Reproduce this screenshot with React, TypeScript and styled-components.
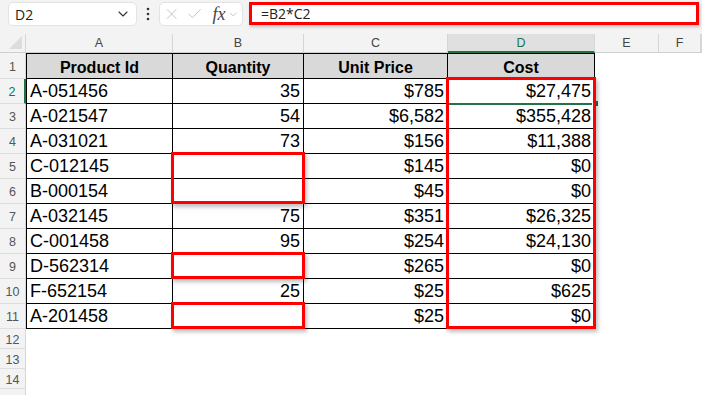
import styled, { createGlobalStyle } from 'styled-components'
import { ChevronDown, X, Check } from 'lucide-react'

const GlobalStyle = createGlobalStyle`
  html, body {
    margin: 0;
    padding: 0;
    background: #ffffff;
    overflow: hidden;
  }
  body {
    font-family: 'Liberation Sans', Arial, sans-serif;
  }
`

const Page = styled('div')`
  width: 702px;
  height: 395px;
  overflow: hidden;
  display: flex;
  flex-flow: column nowrap;
`

const Toolbar = styled('div')`
  height: 34px;
  flex: none;
  display: flex;
  align-items: flex-start;
  padding: 2px 0 0 8px;
  box-sizing: border-box;
  background: #f3f3f3;
`

const NameBox = styled('div')`
  width: 129px;
  height: 24px;
  box-sizing: border-box;
  background: #ffffff;
  border: 1px solid #e3e3e3;
  border-radius: 5px;
  display: flex;
  align-items: center;
  justify-content: space-between;
  padding: 0 5px 0 6px;
  font-family: 'Open Sans', 'Liberation Sans', sans-serif;
  font-size: 14px;
  color: #222;
`

const Dots = styled('div')`
  width: 22px;
  height: 24px;
  display: flex;
  align-items: center;
  justify-content: center;
`

const FxBox = styled('div')`
  width: 84px;
  height: 24px;
  box-sizing: border-box;
  background: #ffffff;
  border: 1px solid #e3e3e3;
  border-radius: 5px;
  display: flex;
  align-items: center;
  gap: 6px;
  padding: 0 3px 0 3px;
  color: #b4b4b4;
`

const FxLabel = styled('span')`
  font-family: 'Liberation Serif', 'Times New Roman', serif;
  font-style: italic;
  font-size: 18px;
  color: #444;
  margin-left: 3px;
  margin-right: -5px;
`

const FormulaInput = styled('div')`
  margin-left: 6px;
  width: 450px;
  height: 23px;
  box-sizing: border-box;
  background: #ffffff;
  border: 3px solid #ff0000;
  box-shadow: 1px 2px 3px rgba(0, 0, 0, 0.2);
  display: flex;
  align-items: center;
  padding-left: 9px;
  font-family: 'Open Sans', 'Liberation Sans', sans-serif;
  font-size: 14px;
  color: #222;
`

const Sheet = styled('div')`
  flex: 1;
  display: grid;
  grid-template-columns: 26px 147px 131px 144px 147px 64px 1fr;
  grid-template-rows: 19px 26px repeat(10, 25px) repeat(4, 20px);
  overflow: hidden;
`

interface Pos {
  $row: number
  $col: number
}

const ColHead = styled('div')<Pos & { $active?: boolean }>`
  grid-row: ${p => p.$row};
  grid-column: ${p => p.$col};
  background: ${p => (p.$active ? '#e0e0e0' : '#f3f3f3')};
  border-right: 1px solid #d6d6d6;
  border-bottom: ${p => (p.$active ? '2px solid #217346' : '1px solid #cfcfcf')};
  display: flex;
  align-items: center;
  justify-content: center;
  font-size: 12.5px;
  color: ${p => (p.$active ? '#217346' : '#444')};
  box-sizing: border-box;
`

const Corner = styled('div')`
  grid-row: 1;
  grid-column: 1;
  background: #f3f3f3;
  border-right: 1px solid #d6d6d6;
  border-bottom: 1px solid #cfcfcf;
  box-sizing: border-box;
  position: relative;

  &::after {
    content: '';
    position: absolute;
    right: 3px;
    bottom: 3px;
    border-style: solid;
    border-width: 0 0 13px 13px;
    border-color: transparent transparent #dcdcdc transparent;
  }
`

const RowHead = styled('div')<Pos & { $active?: boolean }>`
  grid-row: ${p => p.$row};
  grid-column: ${p => p.$col};
  background: #f3f3f3;
  border-bottom: 1px solid #dedede;
  border-right: ${p => (p.$active ? '2px solid #217346' : '1px solid #d6d6d6')};
  display: flex;
  align-items: center;
  justify-content: center;
  padding-top: 2px;
  font-size: 12.5px;
  color: ${p => (p.$active ? '#217346' : '#555')};
  box-sizing: border-box;
`

const Cell = styled('div')<Pos & { $head?: boolean; $align?: 'left' | 'right' }>`
  grid-row: ${p => p.$row};
  grid-column: ${p => p.$col};
  box-sizing: border-box;
  border-right: 1px solid #000;
  border-bottom: 1px solid #000;
  border-top: ${p => (p.$row === 2 ? '1px solid #000' : 'none')};
  border-left: ${p => (p.$col === 2 ? '1px solid #000' : 'none')};
  background: ${p => (p.$head ? '#d9d9d9' : '#ffffff')};
  display: flex;
  align-items: flex-end;
  justify-content: ${p => (p.$head ? 'center' : p.$align === 'right' ? 'flex-end' : 'flex-start')};
  padding: 0 3px 1px 3px;
  font-size: ${p => (p.$head ? '16px' : '18px')};
  font-weight: ${p => (p.$head ? 700 : 400)};
  color: #000;
  white-space: nowrap;
`

const Selection = styled('div')<Pos>`
  grid-row: ${p => p.$row};
  grid-column: ${p => p.$col};
  border-bottom: 2px solid #217346;
  margin-bottom: -1px;
  position: relative;
  z-index: 1;

  &::after {
    content: '';
    position: absolute;
    right: -4px;
    bottom: -4px;
    width: 5px;
    height: 5px;
    background: #217346;
    border: 1px solid #fff;
  }
`

const Highlight = styled('div')<{ $rows: string; $col: number }>`
  grid-row: ${p => p.$rows};
  grid-column: ${p => p.$col};
  margin: -2px -1px 0 -2px;
  border: 3px solid #ff0000;
  box-shadow: 2px 3px 4px rgba(0, 0, 0, 0.25);
  z-index: 2;
  pointer-events: none;
`

const rows: string[][] = [
  ['A-051456', '35', '$785', '$27,475'],
  ['A-021547', '54', '$6,582', '$355,428'],
  ['A-031021', '73', '$156', '$11,388'],
  ['C-012145', '', '$145', '$0'],
  ['B-000154', '', '$45', '$0'],
  ['A-032145', '75', '$351', '$26,325'],
  ['C-001458', '95', '$254', '$24,130'],
  ['D-562314', '', '$265', '$0'],
  ['F-652154', '25', '$25', '$625'],
  ['A-201458', '', '$25', '$0'],
]

const headers = ['Product Id', 'Quantity', 'Unit Price', 'Cost']
const letters = ['A', 'B', 'C', 'D', 'E', 'F']

export default function App (): JSX.Element {
  return (
    <Page>
      <GlobalStyle />
      <Toolbar>
        <NameBox>
          <span>D2</span>
          <ChevronDown size={16} strokeWidth={1.6} color='#333' />
        </NameBox>
        <Dots>
          <svg width='4' height='14' viewBox='0 0 4 14'>
            <circle cx='2' cy='2' r='1.3' fill='#333' />
            <circle cx='2' cy='7' r='1.3' fill='#333' />
            <circle cx='2' cy='12' r='1.3' fill='#333' />
          </svg>
        </Dots>
        <FxBox>
          <X size={18} strokeWidth={1.1} />
          <Check size={18} strokeWidth={1.1} />
          <FxLabel>fx</FxLabel>
          <ChevronDown size={13} strokeWidth={1.4} />
        </FxBox>
        <FormulaInput>=B2*C2</FormulaInput>
      </Toolbar>
      <Sheet>
        <Corner />
        {letters.map((l, i) => (
          <ColHead key={l} $row={1} $col={i + 2} $active={l === 'D'}>{l}</ColHead>
        ))}
        <ColHead $row={1} $col={8} />
        {Array.from({ length: 15 }, (_, i) => (
          <RowHead key={i} $row={i + 2} $col={1} $active={i === 1}>{i < 14 ? i + 1 : ''}</RowHead>
        ))}
        {headers.map((h, i) => (
          <Cell key={h} $row={2} $col={i + 2} $head>{h}</Cell>
        ))}
        {rows.map((r, ri) =>
          r.map((v, ci) => (
            <Cell key={`${ri}-${ci}`} $row={ri + 3} $col={ci + 2} $align={ci === 0 ? 'left' : 'right'}>{v}</Cell>
          ))
        )}
        <Selection $row={3} $col={5} />
        <Highlight $rows='3 / span 10' $col={5} />
        <Highlight $rows='6 / span 2' $col={3} />
        <Highlight $rows='10' $col={3} />
        <Highlight $rows='12' $col={3} />
      </Sheet>
    </Page>
  )
}
